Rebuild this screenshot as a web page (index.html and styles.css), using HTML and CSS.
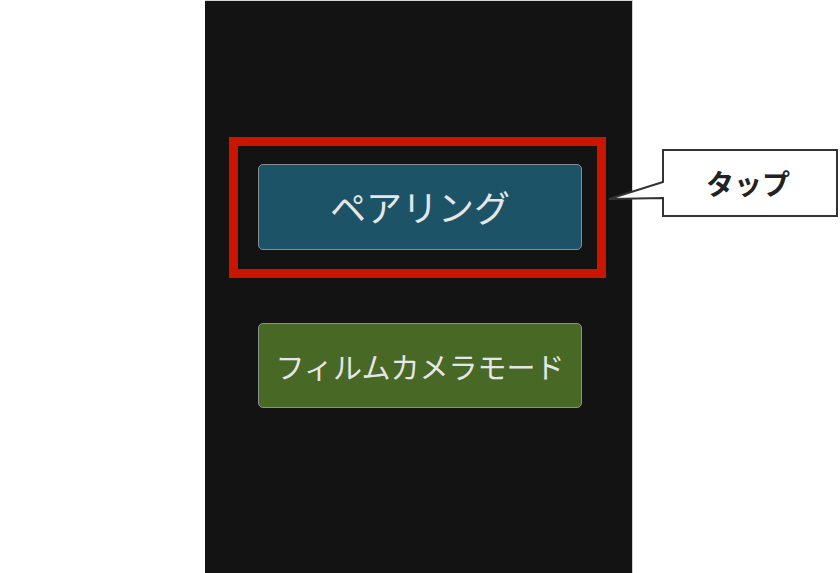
FILE: index.html
```html
<!DOCTYPE html>
<html lang="ja">
<head>
    <meta charset="UTF-8">
    <meta name="viewport" content="width=device-width, initial-scale=1.0">
    <link rel="stylesheet" href="styles.css">
    <title>ペアリング</title>
</head>
<body>
    <div id="page">
        <div id="screen">
            <div class="highlight">
                <button class="menu-btn pairing-btn">ペアリング</button>
            </div>
            <button class="menu-btn film-btn">フィルムカメラモード</button>
        </div>

        <div class="callout">
            <svg class="callout-shape" width="234" height="72" viewBox="0 0 234 72">
                <path d="M57 1 H231 V67 H57 V49 L3 50 L57 33 Z" fill="#fff" stroke="#333" stroke-width="2" stroke-linejoin="miter"/>
            </svg>
            <span class="callout-text">タップ</span>
        </div>
    </div>
</body>
</html>
```

FILE: styles.css
```css
body {
    margin: 0;
    padding: 0;
    background-color: #fff;
    font-family: 'Noto Sans CJK JP', 'Noto Sans', sans-serif;
}

#page {
    position: relative;
    width: 840px;
    height: 573px;
    overflow: hidden;
    display: flex;
    padding-left: 205px;
    box-sizing: border-box;
}

#screen {
    width: 428px;
    height: 573px;
    background-color: #131313;
    border-top: 1px solid #d8d8d8;
    border-right: 1px solid #d0d0d0;
    box-sizing: border-box;
    display: flex;
    flex-direction: column;
    align-items: flex-start;
    padding-top: 136px;
}

.highlight {
    margin-left: 24px;
    border: 9px solid #cc1500;
    padding: 18px 15px 19px 20px;
}

.menu-btn {
    width: 324px;
    height: 86px;
    border: 1px solid #8a8f91;
    border-radius: 5px;
    color: #e6e6e6;
    font-family: 'Noto Sans CJK JP', sans-serif;
    font-weight: 400;
    padding: 0;
    display: flex;
    align-items: center;
    justify-content: center;
}

.pairing-btn {
    background-color: #1d5366;
    font-size: 36px;
    padding-bottom: 2px;
}

.film-btn {
    margin-left: 53px;
    margin-top: 45px;
    height: 85px;
    background-color: #486826;
    font-size: 29px;
}

/* annotation bubble beside the screen */
.callout {
    position: absolute;
    left: 606px;
    top: 149px;
    width: 234px;
    height: 72px;
}

.callout-shape {
    position: absolute;
    left: 0;
    top: 0;
}

.callout-text {
    position: absolute;
    left: 54px;
    top: 1px;
    width: 176px;
    height: 66px;
    display: flex;
    align-items: center;
    justify-content: center;
    font-size: 28px;
    font-weight: 700;
    color: #222;
}
```
